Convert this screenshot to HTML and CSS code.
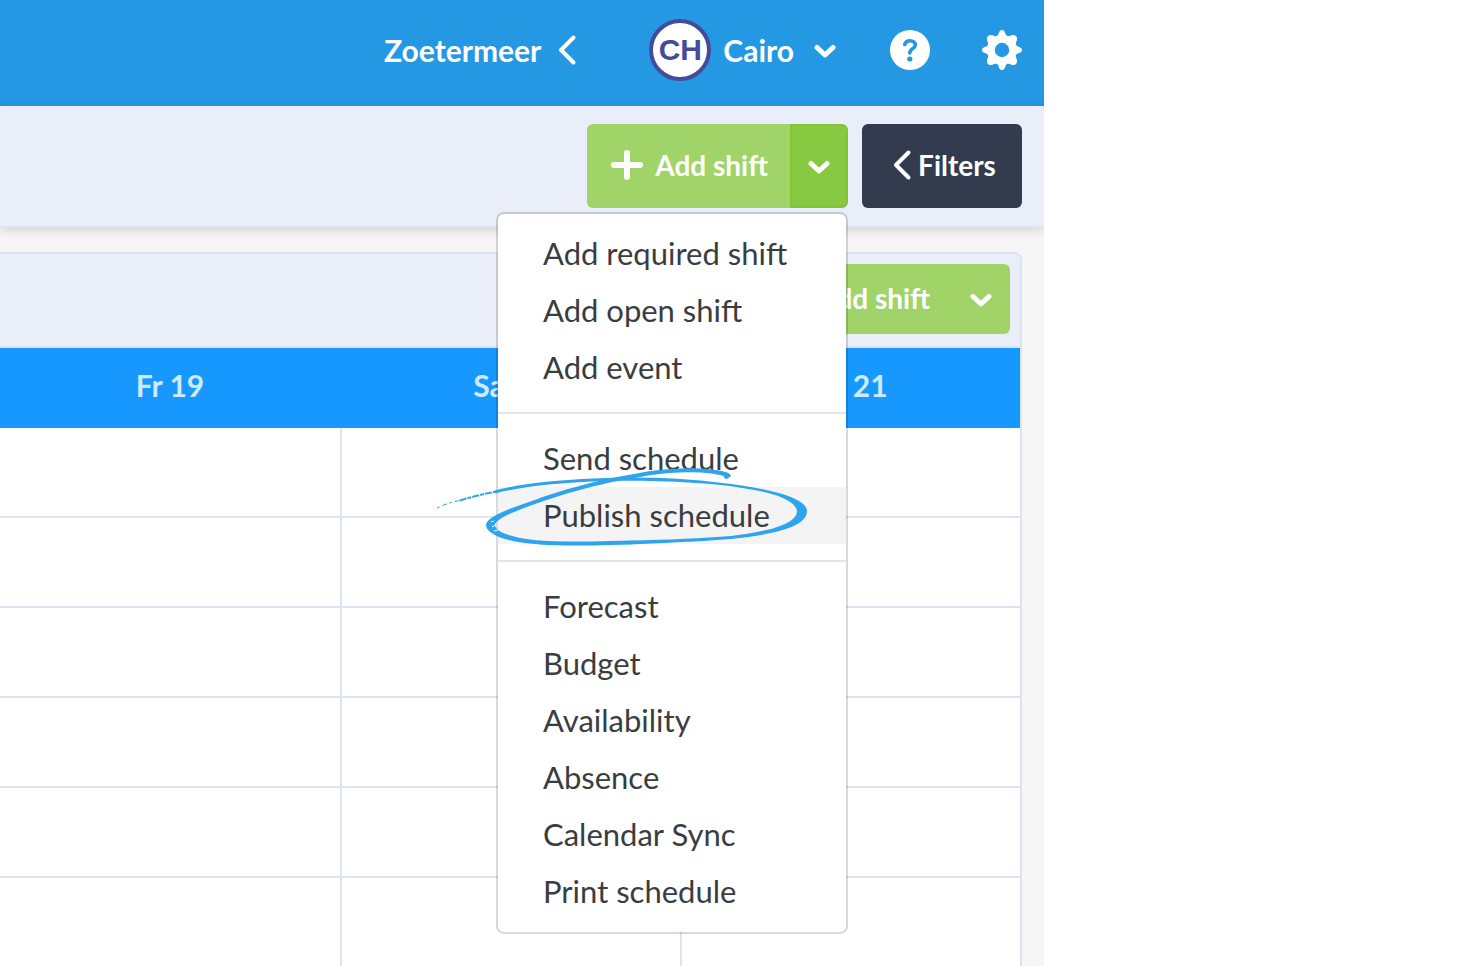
FILE: index.html
```html
<!DOCTYPE html>
<html lang="en">
<head>
  <meta charset="UTF-8">
  <meta name="viewport" content="width=device-width, initial-scale=1.0">
  <title>Schedule</title>
  <link rel="stylesheet" href="styles.css">
</head>
<body>

  <div class="app">
    <header class="topbar">
      <button class="nav-btn location">
        Zoetermeer
        <svg width="20" height="32" viewBox="0 0 20 32"><path d="M16.500 3.500 4 16 16.500 28.500" class="line"/></svg>
      </button>
      <button class="nav-btn user">
        <span class="avatar">CH</span>
        Cairo
        <svg class="caret" width="22" height="16" viewBox="0 0 22 16"><path d="M3 5.500 11 13 19 5.500" class="line thick"/></svg>
      </button>
      <button class="nav-btn" aria-label="Help">
        <svg width="40" height="40" viewBox="0 0 40 40">
          <circle cx="20" cy="20" r="20" fill="#fff"/>
          <path d="M14.700 14.500C15.500 11.800 17.500 10.700 20 10.700C23 10.700 25.300 12.300 25.300 15C25.300 18.700 19.800 18.700 19.800 23" fill="none" stroke="#2498e3" stroke-width="3.600" stroke-linecap="round"/>
          <circle cx="19.800" cy="29" r="2.600" fill="#2498e3"/>
        </svg>
      </button>
      <button class="nav-btn" aria-label="Settings">
        <svg width="40" height="40" viewBox="0 0 40 40">
          <path fill="#fff" fill-rule="evenodd" d="M20 0C22.600 0 22.800 2.600 23.600 4.300C24.300 5.900 25.900 6.500 27.600 5.900C29.400 5.200 31.900 4 33.900 6.100C36 8.100 34.800 10.600 34.100 12.400C33.500 14.100 34.100 15.700 35.700 16.400C37.400 17.200 40 17.400 40 20C40 22.600 37.400 22.800 35.700 23.600C34.100 24.300 33.500 25.900 34.100 27.600C34.800 29.400 36 31.900 33.900 33.900C31.900 36 29.400 34.800 27.600 34.100C25.900 33.500 24.300 34.100 23.600 35.700C22.800 37.400 22.600 40 20 40C17.400 40 17.200 37.400 16.400 35.700C15.700 34.100 14.100 33.500 12.400 34.100C10.600 34.800 8.100 36 6.100 33.900C4 31.900 5.200 29.400 5.900 27.600C6.500 25.900 5.900 24.300 4.300 23.600C2.600 22.800 0 22.600 0 20C0 17.400 2.600 17.200 4.300 16.400C5.900 15.700 6.500 14.100 5.900 12.400C5.200 10.600 4 8.100 6.100 6.100C8.100 4 10.600 5.200 12.400 5.900C14.100 6.500 15.700 5.900 16.400 4.300C17.200 2.600 17.400 0 20 0ZM20 12.800A7.200 7.200 0 1 0 20 27.200A7.200 7.200 0 1 0 20 12.800Z"/>
        </svg>
      </button>
    </header>

    <div class="toolbar">
      <div class="split">
        <button class="split-main">
          <svg width="32" height="32" viewBox="0 0 32 32"><path d="M3 16H29M16 4V28" class="line plus"/></svg>
          Add shift
        </button>
        <button class="split-toggle open" aria-label="More actions" aria-expanded="true">
          <svg width="22" height="16" viewBox="0 0 22 16"><path d="M3 5.500 11 13 19 5.500" class="line thick"/></svg>
        </button>

        <ul class="menu">
          <li><a href="#">Add required shift</a></li>
          <li><a href="#">Add open shift</a></li>
          <li><a href="#">Add event</a></li>
          <li class="divider"></li>
          <li><a href="#">Send schedule</a></li>
          <li class="active">
            <a href="#">Publish schedule</a>
            <svg class="scribble" width="380" height="90" viewBox="0 0 380 90">
              <path class="ink ink-dry" d="M4 44C10 41 18 38 29 36"/>
              <path class="ink ink-rough" d="M27 36.500C38 33 50 30 66 27"/>
              <path class="ink ink-thin" d="M62 28C88 21 125 17 175 15.500"/>
              <path class="ink-fill" d="M170 14C210 12.500 250 14 290 19C325 23 374 32 374 47C374 62 345 70 298 75C260 78 225 79 197 80.500L197 76.500C235 76 270 74 298 72C340 67 364 59 364 47C362 35 335 28 315 25C280 18 215 16 170 17Z"/>
              <path class="ink" d="M198 78.500C170 79 140 81 107 78.500M107 36C145 23 175 16 204 11.500C235 5 275 4 295 11"/>
              <path class="ink-fill" d="M108 34C86 41 53 52 53 61C53 72 80 79 108 80.500L108 76.500C85 75 62 69 62 61C62 55 84 46 108 38Z"/>
              <path class="ink-fill" d="M280 6C289 7 298 9 298 12L294 15L291 14L291 11C287 9 283 8 279 8Z"/>
              <path class="nick" d="M58 58L61 57M59 63L62 61M61 67L65 66"/>
            </svg>
          </li>
          <li class="divider"></li>
          <li><a href="#">Forecast</a></li>
          <li><a href="#">Budget</a></li>
          <li><a href="#">Availability</a></li>
          <li><a href="#">Absence</a></li>
          <li><a href="#">Calendar Sync</a></li>
          <li><a href="#">Print schedule</a></li>
        </ul>
      </div>
      <button class="filters">
        <svg width="20" height="32" viewBox="0 0 20 32"><path d="M16.500 3.500 4 16 16.500 28.500" class="line"/></svg>
        Filters
      </button>
    </div>

    <main class="panel">
      <div class="panel-head">
        <div class="split small">
          <button class="split-main">
            <svg width="32" height="32" viewBox="0 0 32 32"><path d="M3 16H29M16 4V28" class="line plus"/></svg>
            Add shift
          </button>
          <button class="split-toggle" aria-label="More actions">
            <svg width="22" height="16" viewBox="0 0 22 16"><path d="M3 5.500 11 13 19 5.500" class="line thick"/></svg>
          </button>
        </div>
      </div>
      <table class="week">
        <thead>
          <tr><th>Fr 19</th><th>Sa 20</th><th>Su 21</th></tr>
        </thead>
        <tbody>
          <tr><td></td><td></td><td></td></tr>
          <tr><td></td><td></td><td></td></tr>
          <tr><td></td><td></td><td></td></tr>
          <tr><td></td><td></td><td></td></tr>
          <tr><td></td><td></td><td></td></tr>
          <tr><td></td><td></td><td></td></tr>
        </tbody>
      </table>
    </main>
  </div>

</body>
</html>
```
FILE: styles.css
```css
* {
  box-sizing: border-box;
}

body {
  margin: 0;
  padding-right: 416px;
  height: 100vh;
  overflow: hidden;
  background: #fff;
  font-family: 'Proxima Nova', Lato, sans-serif;
  font-size: 30px;
  color: #3a3d40;
}

button {
  margin: 0;
  padding: 0;
  border: none;
  background: none;
  font: inherit;
  color: #fff;
  cursor: pointer;
}

svg {
  display: block;
  flex: none;
}

.app {
  min-height: 100vh;
  overflow: hidden;
  background: #f6f6f6;
}

.line {
  fill: none;
  stroke: #fff;
  stroke-width: 4;
  stroke-linecap: round;
  stroke-linejoin: round;
}

.line.thick {
  stroke-width: 5;
}

.line.plus {
  stroke-width: 6;
}

/* top bar */
.topbar {
  display: flex;
  justify-content: flex-end;
  align-items: center;
  gap: 52px;
  height: 106px;
  padding: 0 22px 6px;
  background: #2498e3;
}

.nav-btn {
  display: flex;
  align-items: center;
  font-weight: 700;
}

.location {
  gap: 16px;
  margin-right: 20px;
}

.user {
  gap: 12px;
  margin-right: 2px;
}

.caret {
  margin-left: 8px;
}

.avatar {
  display: flex;
  align-items: center;
  justify-content: center;
  width: 62px;
  height: 62px;
  border: 4px solid #444b99;
  border-radius: 50%;
  background: #fff;
  color: #444b99;
  font-family: 'Liberation Sans', Arial, sans-serif;
  font-weight: bold;
}

/* action bar */
.toolbar {
  position: relative;
  z-index: 1;
  display: flex;
  justify-content: flex-end;
  gap: 14px;
  padding: 18px 22px;
  background: #eaeef8;
  border-bottom: 2px solid #dce4f2;
  box-shadow: 0 2px 10px rgba(0, 0, 0, 0.15);
}

.split {
  position: relative;
  display: flex;
  height: 84px;
  font-size: 28px;
  font-weight: 700;
}

.split.small {
  height: 70px;
}

.split-main {
  display: flex;
  align-items: center;
  gap: 12px;
  padding: 0 22px 2px 24px;
  border-radius: 6px 0 0 6px;
  background: #a0d468;
}

.split-toggle {
  display: flex;
  align-items: center;
  justify-content: center;
  width: 58px;
  border-radius: 0 6px 6px 0;
  background: #a0d468;
}

.split-toggle.open {
  background: #87c940;
  border: 2px solid #82c436;
}

.filters {
  display: flex;
  align-items: center;
  justify-content: center;
  gap: 6px;
  width: 160px;
  padding: 0 0 2px 4px;
  border-radius: 6px;
  background: #333b4e;
  font-size: 28px;
  font-weight: 700;
}

/* dropdown menu */
.menu {
  position: absolute;
  top: calc(100% + 4px);
  right: 0;
  width: 352px;
  margin: 0;
  padding: 11px 0 12px;
  list-style: none;
  background: #fff;
  background-clip: padding-box;
  border: 2px solid rgba(0, 0, 0, 0.15);
  border-radius: 8px;
  font-size: 31px;
  font-weight: 400;
}

.menu a {
  display: block;
  padding: 0 45px;
  line-height: 57px;
  color: inherit;
  text-decoration: none;
}

.menu .active {
  position: relative;
  background: #f4f4f4;
}

.menu .divider {
  height: 2px;
  margin: 16px 0;
  background: #e5e5e5;
}

.scribble {
  position: absolute;
  top: -23px;
  left: -65px;
  pointer-events: none;
}

.ink {
  fill: none;
  stroke: #2fa4ee;
  stroke-width: 4;
}

.ink-thin {
  stroke-width: 3;
}

.ink-rough {
  stroke-width: 2;
  stroke-dasharray: 7 1 4 1;
}

.ink-dry {
  stroke-width: 1;
  stroke-dasharray: 3 3 5 2;
}

.ink-fill {
  fill: #2fa4ee;
}

.nick {
  stroke: #fff;
  stroke-width: 1;
}

/* schedule */
.panel {
  margin: 24px 22px 0 0;
  border: 2px solid #dce4f2;
  border-left: none;
  border-radius: 0 8px 0 0;
  background: #fff;
}

.panel-head {
  display: flex;
  justify-content: flex-end;
  padding: 10px 10px 12px;
  background: #eaeef8;
  border-bottom: 2px solid #dce4f2;
  border-radius: 0 6px 0 0;
}

.week {
  width: 100%;
  table-layout: fixed;
  border-collapse: separate;
  border-spacing: 0;
}

.week th {
  height: 80px;
  padding: 0 0 6px;
  background: #1698ff;
  color: #cfe9ff;
  font-size: 30px;
  font-weight: 700;
}

.week td {
  height: 90px;
  padding: 0;
  border-bottom: 2px solid #dce4f2;
}

.week td + td {
  border-left: 2px solid #dce4f2;
}
```
